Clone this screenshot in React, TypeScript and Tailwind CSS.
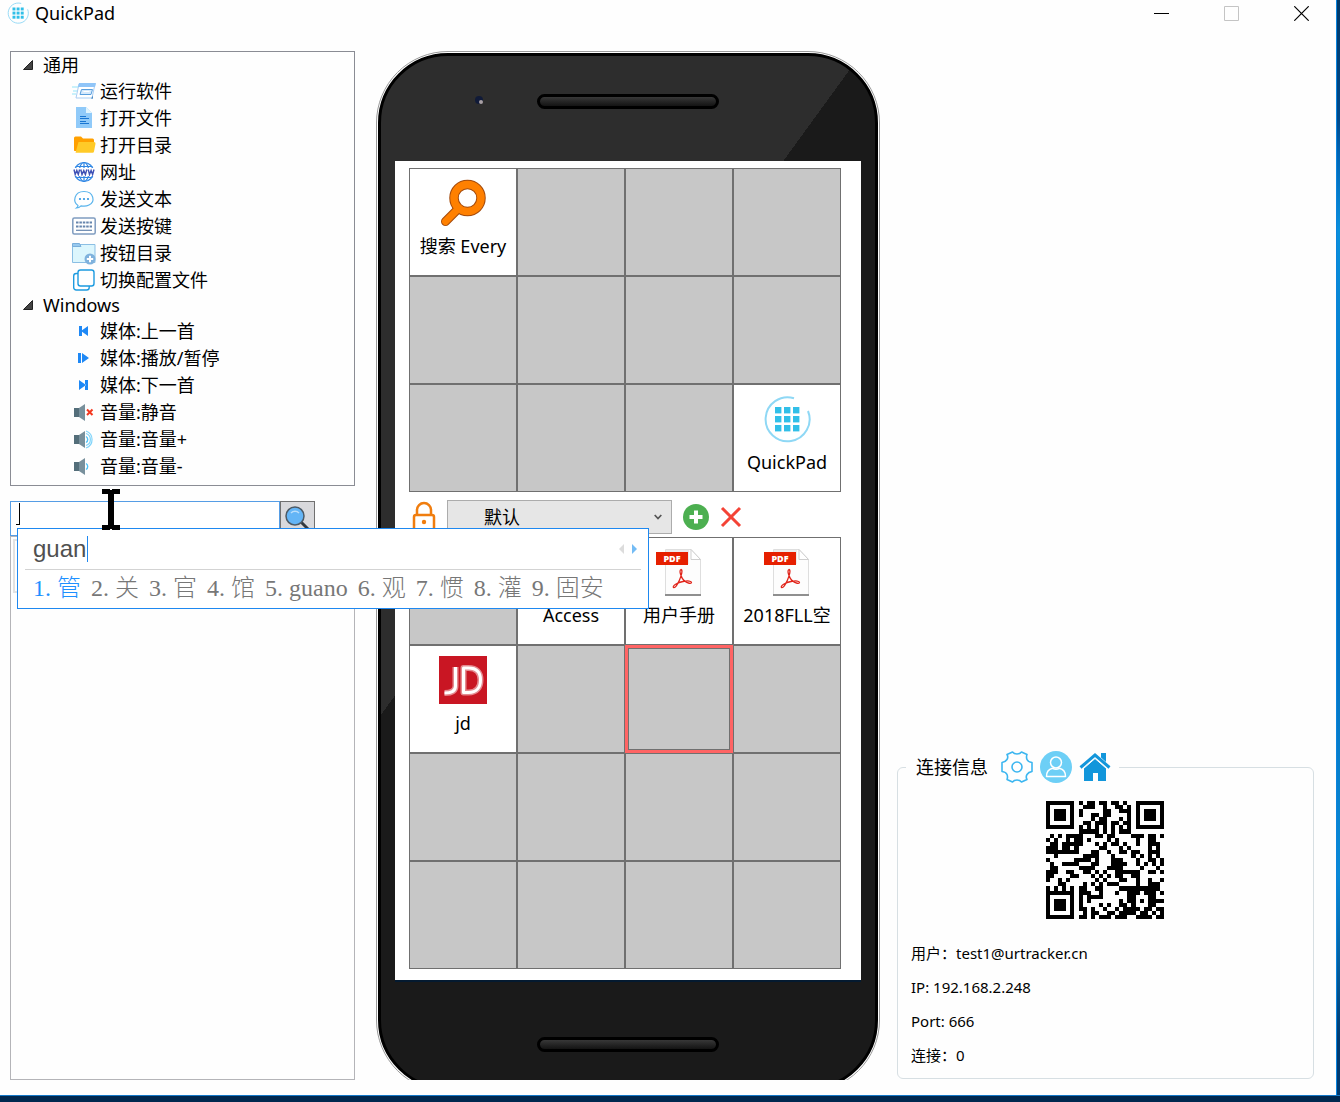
import React from "react";

type IconProps = { className?: string };

function QuickPadLogo({ className }: IconProps) {
  return (
    <svg viewBox="0 0 48 48" className={className} aria-hidden="true">
      <path d="M31 3.2A22 22 0 1 0 45 16" fill="none" stroke="#8fd8f5" strokeWidth="2" />
      {[12, 21, 30].map((y) =>
        [12, 21, 30].map((x) => <rect key={`${x}-${y}`} x={x} y={y} width="6.4" height="6.4" fill="#31bfe8" />)
      )}
    </svg>
  );
}

function RunIcon() {
  return (
    <svg viewBox="0 0 24 24" className="size-6" aria-hidden="true">
      <path d="M0 8h6M1 12h5M0 15h4" stroke="#c9f1fb" strokeWidth="2" />
      <path d="M7 5h16l-3 14H4z" fill="#fff" stroke="#a9cdf3" />
      <path d="M7 4h17l-1 4H6z" fill="#90c5f8" />
      <path d="M9.500 10.500h11l-1.500 5H8z" fill="#d5e9fc" stroke="#5a9fdd" />
      <path d="M11.500 12.500h6" stroke="#fff" />
      <path d="M20.500 17.500l-.5 2.500" stroke="#2f78b9" />
    </svg>
  );
}

function FileIcon() {
  return (
    <svg viewBox="0 0 24 24" className="size-6" aria-hidden="true">
      <path d="M4 1h10l6 6v15H4z" fill="#90caf9" />
      <path d="M14 1l6 6h-6z" fill="#e1f5fe" />
      <path d="M8 10.500h6M8 12.500h9M8 15.500h6M8 17.500h9" stroke="#1976d2" />
    </svg>
  );
}

function FolderIcon() {
  return (
    <svg viewBox="0 0 24 24" className="size-6" aria-hidden="true">
      <path d="M2 5a1.500 1.500 0 0 1 1.500-1.500H9l2 2h9.500A1.500 1.500 0 0 1 22 7v11H3.500A1.500 1.500 0 0 1 2 17.500z" fill="#ffa000" />
      <path d="M6.500 9H22a1.500 1.500 0 0 1 1.500 1.700L22 18.500a1.500 1.500 0 0 1-1.500 1.200H3.500z" fill="#ffca28" />
    </svg>
  );
}

function WebIcon() {
  return (
    <svg viewBox="0 0 24 24" className="size-6" aria-hidden="true">
      <g fill="none" stroke="#2f86e4" strokeWidth="1.200">
        <circle cx="12" cy="12" r="9.500" />
        <ellipse cx="12" cy="12" rx="4.800" ry="9.500" />
        <path d="M12 2.500v19M3.500 6.500h17M3.500 17.500h17" />
      </g>
      <rect x="1" y="8" width="22" height="8" fill="#fff" />
      <path d="M2 9.500l1.200 5 1.600-4 1.500 4 1.300-5M8.800 9.500l1.200 5 1.800-4 1.600 4 1.400-5M16.200 9.500l1.300 5 1.600-4 1.500 4 1.400-5" fill="none" stroke="#3f51b5" strokeWidth="1.400" />
    </svg>
  );
}

function ChatIcon() {
  return (
    <svg viewBox="0 0 24 24" className="size-6" aria-hidden="true">
      <path d="M6 18.500C.5 15 2 4.500 12 4.500S23.500 15 17 18c-3 1.500-6 1.200-8 .8-1 1-2.500 2-4.500 2.200 1.200-1 1.600-1.600 1.500-2.500z" fill="#fff" stroke="#5ab4ec" strokeWidth="1.200" />
      <circle cx="8" cy="12" r="1.100" fill="#2f95e0" />
      <circle cx="12" cy="12" r="1.100" fill="#2f95e0" />
      <circle cx="16" cy="12" r="1.100" fill="#2f95e0" />
    </svg>
  );
}

function KeyboardIcon() {
  return (
    <svg viewBox="0 0 24 24" className="size-6" aria-hidden="true">
      <rect x=".8" y="4" width="22.400" height="16" rx="1.500" fill="#fff" stroke="#7f9cc0" strokeWidth="1.500" />
      <path d="M4 8.500h16M4 12.500h16" stroke="#6685ad" strokeWidth="2.200" strokeDasharray="2.500 .9" />
      <path d="M4 16.300h16" stroke="#6685ad" strokeWidth="1.200" />
    </svg>
  );
}

function FolderAddIcon() {
  return (
    <svg viewBox="0 0 24 24" className="size-6" aria-hidden="true">
      <path d="M.5 3.500h22.500v18H.5z" fill="#dcf6fd" stroke="#8bbfe4" />
      <path d="M.5 2.500h7l1.500 3H.5z" fill="#98c9ee" stroke="#79aedb" />
      <circle cx="18" cy="18" r="5.500" fill="#7fb2dd" />
      <path d="M18 14.800v6.400M14.800 18h6.400" stroke="#fff" strokeWidth="2" />
    </svg>
  );
}

function CopyIcon() {
  return (
    <svg viewBox="0 0 24 24" className="size-6" aria-hidden="true">
      <rect x="1.700" y="5.500" width="15.500" height="16.500" rx="2.500" fill="#fff" stroke="#1d9be0" strokeWidth="1.400" />
      <rect x="6" y="2" width="16" height="16" rx="2.500" fill="#fff" stroke="#1d9be0" strokeWidth="1.400" />
    </svg>
  );
}

function PrevIcon() {
  return (
    <svg viewBox="0 0 24 24" className="size-6" aria-hidden="true">
      <path d="M7 7h3v10H7zM16 7v10l-7-5z" fill="#1e88f5" />
    </svg>
  );
}

function PlayIcon() {
  return (
    <svg viewBox="0 0 24 24" className="size-6" aria-hidden="true">
      <path d="M6 7h3v10H6zM10 7v10l7-5z" fill="#1e88f5" />
    </svg>
  );
}

function NextIcon() {
  return (
    <svg viewBox="0 0 24 24" className="size-6" aria-hidden="true">
      <path d="M13 7h3v10h-3zM7 7v10l7-5z" fill="#1e88f5" />
    </svg>
  );
}

function SpeakerIcon({ level }: { level: "mute" | "up" | "down" }) {
  return (
    <svg viewBox="0 0 24 24" className="size-6" aria-hidden="true">
      <path d="M2 8h6v9H2z" fill="#546e7a" />
      <path d="M7 8l6-4v17l-6-4z" fill="#78909c" />
      {level === "mute" && <path d="M15 9.500l5.500 5.500M20.500 9.500L15 15" stroke="#f4371e" strokeWidth="2" />}
      {level !== "mute" && <path d="M14 9.500a3.500 3.500 0 0 1 0 6" fill="none" stroke="#4fc3f7" strokeWidth="1.400" />}
      {level === "up" && (
        <path d="M14 6.500a6.300 6.300 0 0 1 0 12M14 4a9 9 0 0 1 0 17" fill="none" stroke="#81d4fa" strokeWidth="1.200" />
      )}
    </svg>
  );
}

function LensIcon() {
  return (
    <svg viewBox="0 0 28 28" className="size-7" aria-hidden="true">
      <path d="M18 18l8 8" stroke="#333a40" strokeWidth="3" />
      <circle cx="12" cy="12" r="9" fill="#64b5f6" stroke="#4c5a66" strokeWidth="1.500" />
      <path d="M8 9a5.500 5.500 0 0 1 8 0" fill="none" stroke="#bbdefb" strokeWidth="1.500" />
    </svg>
  );
}

function EverythingIcon() {
  return (
    <svg viewBox="0 0 48 48" className="size-12" aria-hidden="true">
      <path d="M19 30L6.500 42.500" stroke="#a34a0c" strokeWidth="9" strokeLinecap="round" />
      <circle cx="28.500" cy="19" r="13.500" fill="none" stroke="#a34a0c" strokeWidth="9.500" />
      <circle cx="28.500" cy="19" r="13.500" fill="none" stroke="#ff8000" strokeWidth="7.500" />
      <path d="M20 29L6.500 42.500" stroke="#ff8000" strokeWidth="7" strokeLinecap="round" />
    </svg>
  );
}

function PdfIcon() {
  return (
    <svg viewBox="0 0 48 48" className="size-12" aria-hidden="true">
      <path d="M10.500 1.500H36l9.500 10v35h-35z" fill="#fdfdfd" stroke="#dedede" />
      <path d="M11 2h23v14H11z" fill="#ececec" />
      <path d="M36 1.500v10h9.500z" fill="#fff" stroke="#cfcfcf" />
      <path d="M10 47h36" stroke="#8f8f8f" strokeWidth="2" />
      <path d="M1 4h32v13H1z" fill="#e62000" />
      <text x="17" y="14" textAnchor="middle" fontFamily="Open Sans, sans-serif" fontSize="9" fontWeight="800" fill="#fff">
        PDF
      </text>
      <path d="M26 21.500c2 .5.500 6-1.500 10.500-2 4.500-4.500 8.500-6 7.500-1.500-1.500 4-5 9.500-6 5-1 8.500-.5 8.500 1s-4 1-7-1.500c-3-2.500-6-10.500-3.500-11.500z" fill="none" stroke="#e1251b" strokeWidth="1.300" />
    </svg>
  );
}

function JdIcon() {
  return (
    <svg viewBox="0 0 48 48" className="size-12" aria-hidden="true">
      <path d="M0 0h48v48H0z" fill="#c91623" />
      <g fill="none" strokeLinejoin="round">
        <path d="M16.500 11v19c0 5-4 7-11 7M24.500 12v24.500h5c8 0 12-5 12-12.500s-4-12-12-12z" stroke="#e58b91" strokeWidth="6" />
        <path d="M16.500 11v19c0 5-4 7-11 7M24.500 12v24.500h5c8 0 12-5 12-12.500s-4-12-12-12z" stroke="#fff" strokeWidth="3" />
      </g>
    </svg>
  );
}

function LockIcon() {
  return (
    <svg viewBox="0 0 24 32" className="h-8 w-6" aria-hidden="true">
      <path d="M5 14V9a7 7 0 0 1 14 0v5" fill="none" stroke="#f07d0e" strokeWidth="2.500" />
      <rect x="2" y="14" width="20" height="16" rx="2" fill="#fff" stroke="#f07d0e" strokeWidth="2.500" />
      <circle cx="12" cy="21" r="2.200" fill="#f07d0e" />
    </svg>
  );
}

function GearIcon() {
  return (
    <svg viewBox="0 0 32 32" className="size-8" aria-hidden="true">
      <g fill="none" stroke="#3cb6f0" strokeWidth="1.600" strokeLinejoin="round">
        <path d="M11.500 1Q13 3 16 3T20.500 1L26 3.500Q25 6 26 8.500T31 11.500V20.500Q27.500 21 26 23.500T26 28.500L20.500 31Q19 29 16 29T11.500 31L6 28.500Q7 26 6 23.500T1 20.500V11.500Q4.500 11 6 8.500T6 3.500Z" />
        <circle cx="16" cy="16" r="5" />
      </g>
    </svg>
  );
}

function UserIcon() {
  return (
    <svg viewBox="0 0 32 32" className="size-8" aria-hidden="true">
      <circle cx="16" cy="16" r="16" fill="#6dcff6" />
      <g fill="none" stroke="#fff" strokeWidth="1.500" strokeLinejoin="round">
        <circle cx="16" cy="11.500" r="5.500" />
        <path d="M6.500 25.500c0-5 3-7.500 6-8.200 2 1 5 1 7 0 3 .7 6 3.200 6 8.200z" />
      </g>
    </svg>
  );
}

function HomeIcon() {
  return (
    <svg viewBox="0 0 32 32" className="size-8" aria-hidden="true">
      <path d="M5 17L16 7.500 27 17v13h-8v-8h-5v8H5z" fill="#1296db" />
      <path d="M22 2h5v9l-5-4.500z" fill="#1296db" />
      <path d="M1.500 16.500L16 4l14.500 12.500" fill="none" stroke="#1296db" strokeWidth="3" />
      <path d="M4.500 17.500L16 7.500l11.500 10" fill="none" stroke="#fff" strokeWidth="1" />
    </svg>
  );
}

const qrRows = [
  "11111110101101101101001111111",
  "10000010011100100110101000001",
  "10111010100000110011101011101",
  "10111010100110110000101011101",
  "10111010000101100010101011101",
  "10000010011011101101101000001",
  "11111110101010101010101111111",
  "00000000111110101011100000000",
  "01010111100011011000011101101",
  "10100101101000010100001001100",
  "01101111100010101101001001110",
  "11101101000001100010100001010",
  "11111111000110010011011001110",
  "00100000011110001000010101010",
  "10000001111010001110001001101",
  "01001111000110001111001010101",
  "01100000111100011110000100010",
  "11100110011010100111111001101",
  "11000011000101010110011000000",
  "10010100000010100011001001001",
  "00011000010101011100001001110",
  "10101010110011000011111111110",
  "00000000111001000100111011101",
  "11111110101111000000110001100",
  "10000010101000000010110101111",
  "10111010100001010011010001100",
  "10111010110100100101111011011",
  "10111010010110011011110110101",
  "10000010110101110111001111011",
];

function QrCode() {
  return (
    <svg viewBox="0 0 29 29" className="size-[118px]" shapeRendering="crispEdges" role="img" aria-label="QR">
      {qrRows.map((row, y) =>
        row.split("").map((bit, x) => (bit === "1" ? <rect key={`${x}-${y}`} x={x} y={y} width="1" height="1" /> : null))
      )}
      <path d="M0 22h7v7H0z" />
      <path d="M1 23h5v5H1z" fill="#fff" />
      <path d="M2 24h3v3H2z" />
    </svg>
  );
}

type TreeItem = { label: string; icon: React.ReactNode };

const groups: { name: string; items: TreeItem[] }[] = [
  {
    name: "通用",
    items: [
      { label: "运行软件", icon: <RunIcon /> },
      { label: "打开文件", icon: <FileIcon /> },
      { label: "打开目录", icon: <FolderIcon /> },
      { label: "网址", icon: <WebIcon /> },
      { label: "发送文本", icon: <ChatIcon /> },
      { label: "发送按键", icon: <KeyboardIcon /> },
      { label: "按钮目录", icon: <FolderAddIcon /> },
      { label: "切换配置文件", icon: <CopyIcon /> },
    ],
  },
  {
    name: "Windows",
    items: [
      { label: "媒体:上一首", icon: <PrevIcon /> },
      { label: "媒体:播放/暂停", icon: <PlayIcon /> },
      { label: "媒体:下一首", icon: <NextIcon /> },
      { label: "音量:静音", icon: <SpeakerIcon level="mute" /> },
      { label: "音量:音量+", icon: <SpeakerIcon level="up" /> },
      { label: "音量:音量-", icon: <SpeakerIcon level="down" /> },
    ],
  },
];

type Tile = { label: string; icon: React.ReactNode } | "selected" | null;

const topTiles: Tile[] = [
  { label: "搜索 Every", icon: <EverythingIcon /> },
  null, null, null,
  null, null, null, null,
  null, null, null,
  { label: "QuickPad", icon: <QuickPadLogo className="size-12" /> },
];

const bottomTiles: Tile[] = [
  null,
  { label: "Access", icon: null },
  { label: "用户手册", icon: <PdfIcon /> },
  { label: "2018FLL空", icon: <PdfIcon /> },
  { label: "jd", icon: <JdIcon /> },
  null, "selected", null,
  null, null, null, null,
  null, null, null, null,
];

const candidates = ["管", "关", "官", "馆", "guano", "观", "惯", "灌", "固安"];

function TileGrid({ tiles }: { tiles: Tile[] }) {
  return (
    <div className="grid grid-cols-4">
      {tiles.map((tile, i) => {
        if (tile === "selected") {
          return (
            <button key={i} aria-label="空按钮" className="aspect-square border-3 border-[#ff6464] bg-[#c7c7c7]">
              <span className="block size-full border border-[#707070]" />
            </button>
          );
        }
        if (!tile) {
          return <button key={i} aria-label="空按钮" className="aspect-square border border-[#707070] bg-[#c7c7c7]" />;
        }
        return (
          <button key={i} className="flex aspect-square flex-col items-center gap-[7px] border border-[#707070] bg-white pt-[10px]">
            <span className="block size-12 shrink-0">{tile.icon}</span>
            <span className="text-lg leading-6 whitespace-nowrap">{tile.label}</span>
          </button>
        );
      })}
    </div>
  );
}

function TitleBar() {
  return (
    <header className="mb-[25px] flex h-[26px] items-center pl-[7px]">
      <QuickPadLogo className="size-[22px]" />
      <h1 className="ml-1.5 flex-1 text-lg leading-6">QuickPad</h1>
      <button aria-label="最小化" className="flex h-full w-[70px] items-center justify-center">
        <svg viewBox="0 0 15 15" className="size-[15px]" shapeRendering="crispEdges">
          <path d="M0 7h15v1H0z" />
        </svg>
      </button>
      <button aria-label="最大化" className="flex h-full w-[70px] items-center justify-center">
        <svg viewBox="0 0 15 15" className="size-[15px]">
          <path d="M.5.5h14v14H.5z" fill="none" stroke="#c4c4c4" />
        </svg>
      </button>
      <button aria-label="关闭" className="flex h-full w-[70px] items-center justify-center">
        <svg viewBox="0 0 15 15" className="size-[15px]">
          <path d="M.3.3l14.400 14.400M14.700.3L.3 14.700" stroke="#000" strokeWidth="1.200" />
        </svg>
      </button>
    </header>
  );
}

function ImePopup() {
  return (
    <div className="absolute top-[477px] left-[7px] z-10 h-[81px] w-[632px] border border-[#1e88f0] bg-white px-[7px]">
      <div className="flex h-[41px] items-center border-b border-[#d3d3d3] pl-2">
        <span className="font-['Liberation_Sans',sans-serif] text-2xl leading-7 text-[#505050]">guan</span>
        <span className="ml-px h-[26px] w-px bg-[#1e88f0]" />
        <svg viewBox="0 0 18 10" className="mr-1 ml-auto h-2.5 w-[18px]" aria-hidden="true">
          <path d="M5 0v10L0 5z" fill="#dcdcdc" />
          <path d="M13 0v10l5-5z" fill="#74bcf5" />
        </svg>
      </div>
      <ol className="flex gap-2.5 pt-0.5 pl-2 font-['Liberation_Serif','Noto_Sans_CJK_SC',serif] text-2xl leading-8 font-light text-[#777]">
        {candidates.map((word, i) => (
          <li key={word} className={i === 0 ? "flex text-[#1e90ff]" : "flex"}>
            <span className="w-6">{i + 1}.</span>
            <span>{word}</span>
          </li>
        ))}
      </ol>
    </div>
  );
}

function Sidebar() {
  return (
    <aside className="relative flex w-[345px] shrink-0 flex-col">
      <div className="border border-[#8a8c94] pt-px pb-1.5">
        {groups.map((group) => (
          <section key={group.name}>
            <h2 className="flex h-6 items-center text-lg leading-6">
              <svg viewBox="0 0 10 10" className="mr-2.5 ml-3 size-2.5" aria-hidden="true">
                <path d="M9.500.5v9H.5z" fill="#444" stroke="#222" />
              </svg>
              {group.name}
            </h2>
            <ul>
              {group.items.map((item) => (
                <li key={item.label}>
                  <button className="flex h-[27px] w-full items-center gap-1 pl-[61px] text-lg leading-6">
                    {item.icon}
                    {item.label}
                  </button>
                </li>
              ))}
            </ul>
          </section>
        ))}
      </div>
      <div className="relative mt-[15px] flex h-[35px]">
        <input aria-label="搜索" className="w-[270px] border border-[#569de5] bg-white px-2 text-lg outline-none" />
        <svg viewBox="0 0 4 22" className="absolute top-0.5 left-1.5 h-[22px] w-1" shapeRendering="crispEdges" aria-hidden="true">
          <path d="M3 0h1v22H0v-1h3z" />
        </svg>
        <button aria-label="查找" className="flex w-[35px] items-start border border-[#707070] bg-[#d9d9dc] pt-0.5 pl-0.5">
          <LensIcon />
        </button>
      </div>
      <div className="flex-1 border border-[#b4b4b8] p-0.5">
        <div className="h-[54px] border-2 border-[#e2e2e2]" />
      </div>
      <ImePopup />
      <svg viewBox="0 0 18 41" className="absolute top-[438px] left-[92px] z-20 h-[41px] w-[18px]" shapeRendering="crispEdges" aria-hidden="true">
        <path d="M0 0h8v1h2V0h8v5h-6v31h6v5h-8v-1H8v1H0v-5h6V5H0z" />
      </svg>
    </aside>
  );
}

function Speaker() {
  return <div className="mx-auto h-[15px] w-[182px] rounded-full border-3 border-black bg-gradient-to-b from-[#383838] to-[#141414]" />;
}

function Phone() {
  return (
    <main className="w-[504px] shrink-0 overflow-hidden">
      <div className="-mb-3 rounded-[72px] border border-[#9a9a9a] bg-white p-px">
        <div className="rounded-[70px] border-[3px] border-black bg-[linear-gradient(126deg,#2d2d2d_38.5%,#1a1a1a_38.5%)] px-3.5">
          <div className="relative h-[105px] pt-[38px]">
            <Speaker />
            <span className="absolute top-10 left-[80px] size-2 rounded-full bg-[#101a38]">
              <span className="absolute right-0 bottom-0 size-1 rounded-full bg-[#a9a0a4]" />
            </span>
          </div>
          <div className="bg-white pt-[7px] pr-5 pb-[11px] pl-3.5">
            <TileGrid tiles={topTiles} />
            <div className="flex h-[45px] items-center pt-1 pl-[3px]">
              <button aria-label="锁定">
                <LockIcon />
              </button>
              <div className="relative mr-[11px] ml-[11px] w-[225px]">
                <select aria-label="配置" className="h-[34px] w-full appearance-none border border-[#acacac] bg-[#e6e6e6] pl-9 text-lg leading-6">
                  <option>默认</option>
                </select>
                <svg viewBox="0 0 8 6" className="pointer-events-none absolute top-3.5 right-2.5 h-1.5 w-2" aria-hidden="true">
                  <path d="M.7 1L4 4.500 7.300 1" fill="none" stroke="#555" strokeWidth="1.700" />
                </svg>
              </div>
              <button aria-label="添加">
                <svg viewBox="0 0 26 26" className="size-[26px]">
                  <circle cx="13" cy="13" r="13" fill="#4caf50" />
                  <path d="M13 6.500v13M6.500 13h13" stroke="#fff" strokeWidth="4" />
                </svg>
              </button>
              <button aria-label="删除" className="ml-[11px]">
                <svg viewBox="0 0 22 22" className="size-[22px]">
                  <path d="M2 2l18 18M20 2L2 20" stroke="#f44336" strokeWidth="3" />
                </svg>
              </button>
            </div>
            <TileGrid tiles={bottomTiles} />
          </div>
          <div className="h-[107px] border-t-2 border-[#041a30] pt-[55px]">
            <Speaker />
          </div>
        </div>
      </div>
    </main>
  );
}

function ConnectionPanel() {
  return (
    <fieldset className="mr-[22px] mb-px flex-1 self-end rounded-md border border-[#d7dfe3] pb-1.5">
      <legend className="ml-2 flex h-8 items-center gap-[7px] pr-2 pl-2.5 text-lg leading-6">
        <span className="mr-1.5">连接信息</span>
        <button aria-label="设置"><GearIcon /></button>
        <button aria-label="用户"><UserIcon /></button>
        <a href="#home" aria-label="主页"><HomeIcon /></a>
      </legend>
      <div className="flex justify-center pt-[18px] pr-0.5 pb-[17px]">
        <QrCode />
      </div>
      <div className="pl-[13px] text-[15px] leading-[34px]">
        <p>用户：test1@urtracker.cn</p>
        <p>IP: 192.168.2.248</p>
        <p>Port: 666</p>
        <p>连接：0</p>
      </div>
    </fieldset>
  );
}

export default function App() {
  return (
    <div className="flex min-h-screen flex-col bg-[#00284f] font-['Noto_Sans','Noto_Sans_CJK_SC',sans-serif] text-black">
      <div className="flex flex-1">
        <div className="flex flex-1 flex-col bg-[#fefefe] pb-[15px]">
          <TitleBar />
          <div className="flex flex-1 pl-2.5">
            <Sidebar />
            <div className="mr-[17px] ml-[21px] flex">
              <Phone />
            </div>
            <ConnectionPanel />
          </div>
        </div>
        <div className="w-1 border-l border-[#0a84dd] bg-[linear-gradient(#003868,#004a8c_11%,#0064b4_14%,#0a90dc_21%,#0068b8_50%,#0a8ad6_80%,#003a70_95%)]" />
      </div>
      <footer className="h-[7px] border-t border-[#1478c8]" />
    </div>
  );
}
